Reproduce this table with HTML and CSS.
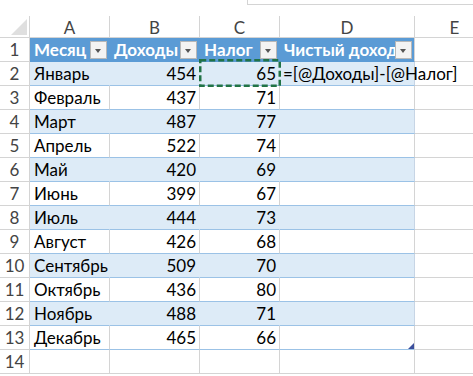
FILE: index.html
```html
<!DOCTYPE html>
<html lang="ru">
<head>
<meta charset="utf-8">
<link rel="stylesheet" href="styles.css">
</head>
<body>
<div class="fbar"><div class="fbox"></div></div>
<div class="sheet">
  <div class="corner"><span class="tri"></span></div>
  <div class="ch">A</div><div class="ch">B</div><div class="ch">C</div><div class="ch">D</div><div class="ch">E</div>

  <div class="rh">1</div>
  <div class="c th"><span class="tt">Месяц</span><span class="dd"></span></div>
  <div class="c th"><span class="tt">Доходы</span><span class="dd"></span></div>
  <div class="c th"><span class="tt">Налог</span><span class="dd"></span></div>
  <div class="c th lastc"><span class="tt">Чистый доход</span><span class="dd"></span></div>
  <div class="c"></div>

  <div class="rh">2</div>
  <div class="c band">Январь</div><div class="c band num">454</div>
  <div class="c band num sel">65<svg class="ants" width="82" height="28" viewBox="0 0 82 28"><rect x="1.25" y="1.25" width="79.5" height="25.5" fill="none" stroke="#217346" stroke-width="2.5" stroke-dasharray="6 3"/></svg></div>
  <div class="c band lastc formula">=[@Доходы]-[@Налог]</div><div class="c"></div>

  <div class="rh">3</div>
  <div class="c t">Февраль</div><div class="c t num">437</div><div class="c t num">71</div><div class="c t lastc"></div><div class="c"></div>

  <div class="rh">4</div>
  <div class="c band">Март</div><div class="c band num">487</div><div class="c band num">77</div><div class="c band lastc"></div><div class="c"></div>

  <div class="rh">5</div>
  <div class="c t">Апрель</div><div class="c t num">522</div><div class="c t num">74</div><div class="c t lastc"></div><div class="c"></div>

  <div class="rh">6</div>
  <div class="c band">Май</div><div class="c band num">420</div><div class="c band num">69</div><div class="c band lastc"></div><div class="c"></div>

  <div class="rh">7</div>
  <div class="c t">Июнь</div><div class="c t num">399</div><div class="c t num">67</div><div class="c t lastc"></div><div class="c"></div>

  <div class="rh">8</div>
  <div class="c band">Июль</div><div class="c band num">444</div><div class="c band num">73</div><div class="c band lastc"></div><div class="c"></div>

  <div class="rh">9</div>
  <div class="c t">Август</div><div class="c t num">426</div><div class="c t num">68</div><div class="c t lastc"></div><div class="c"></div>

  <div class="rh">10</div>
  <div class="c band">Сентябрь</div><div class="c band num">509</div><div class="c band num">70</div><div class="c band lastc"></div><div class="c"></div>

  <div class="rh">11</div>
  <div class="c t">Октябрь</div><div class="c t num">436</div><div class="c t num">80</div><div class="c t lastc"></div><div class="c"></div>

  <div class="rh">12</div>
  <div class="c band">Ноябрь</div><div class="c band num">488</div><div class="c band num">71</div><div class="c band lastc"></div><div class="c"></div>

  <div class="rh">13</div>
  <div class="c t">Декабрь</div><div class="c t num">465</div><div class="c t num">66</div><div class="c t lastc resize"><span class="handle"></span></div><div class="c"></div>

  <div class="rh">14</div>
  <div class="c"></div><div class="c"></div><div class="c"></div><div class="c"></div><div class="c"></div>
</div>
</body>
</html>
```
FILE: styles.css
```css
html, body {
  margin: 0;
  padding: 0;
  background: #ffffff;
}
body {
  width: 473px;
  height: 376px;
  overflow: hidden;
  font-family: Lato, "Open Sans", "Liberation Sans", sans-serif;
  font-size: 17px;
  color: #000;
}
.fbar {
  height: 16px;
  box-sizing: border-box;
  padding-left: 247px;
}
.fbox {
  height: 5px;
  box-sizing: border-box;
  border-left: 1px solid #d4d4d4;
  border-bottom: 1px solid #d4d4d4;
}
.sheet {
  display: grid;
  grid-template-columns: 30px 80px 90px 80px 135px 80px;
  grid-template-rows: 22px repeat(14, 24px);
}
.sheet > div {
  box-sizing: border-box;
  border-right: 1px solid #d4d4d4;
  border-bottom: 1px solid #d4d4d4;
  white-space: nowrap;
  line-height: 23px;
}
.corner {
  position: relative;
}
.tri {
  position: absolute;
  right: 2px;
  bottom: 2px;
  width: 0;
  height: 0;
  border-left: 16px solid transparent;
  border-bottom: 16px solid #dfdfdf;
}
.ch {
  color: #444;
  text-align: center;
  line-height: 22px;
}
.rh {
  color: #444;
  text-align: center;
}
.c {
  padding: 0 3px 0 4px;
  overflow: hidden;
  position: relative;
}
.num {
  text-align: right;
}
.th {
  background: #5b9bd5;
  border-right-color: #5b9bd5 !important;
  border-bottom-color: #5b9bd5 !important;
  color: #fff;
  font-weight: bold;
  display: flex;
  align-items: center;
  padding-right: 2px;
}
.th.lastc {
  border-right-color: #d4d4d4 !important;
}
.dd {
  position: absolute;
  right: 2px;
  bottom: 2px;
  width: 17px;
  height: 18px;
  box-sizing: border-box;
  background: #f3f3f3;
  border: 1px solid #b8b8b8;
  z-index: 1;
}
.dd::after {
  content: "";
  position: absolute;
  left: 4px;
  top: 7px;
  border-left: 3.5px solid transparent;
  border-right: 3.5px solid transparent;
  border-top: 4px solid #555;
}
.band {
  background: #ddebf7;
  border-right-color: #ddebf7 !important;
  border-bottom-color: #9bc2e6 !important;
}
.band.lastc {
  border-right-color: #c7d5e5 !important;
}
.t {
  border-bottom-color: #9bc2e6 !important;
}
.sel {
  overflow: visible;
  z-index: 2;
}
.ants {
  position: absolute;
  left: -1px;
  top: -3px;
}
.formula {
  overflow: visible;
  z-index: 1;
  padding-left: 3px;
  border-right-color: #ddebf7 !important;
}
.handle {
  position: absolute;
  right: 0;
  bottom: 0;
  width: 0;
  height: 0;
  border-left: 6px solid transparent;
  border-bottom: 6px solid #3c4f9c;
}
```
